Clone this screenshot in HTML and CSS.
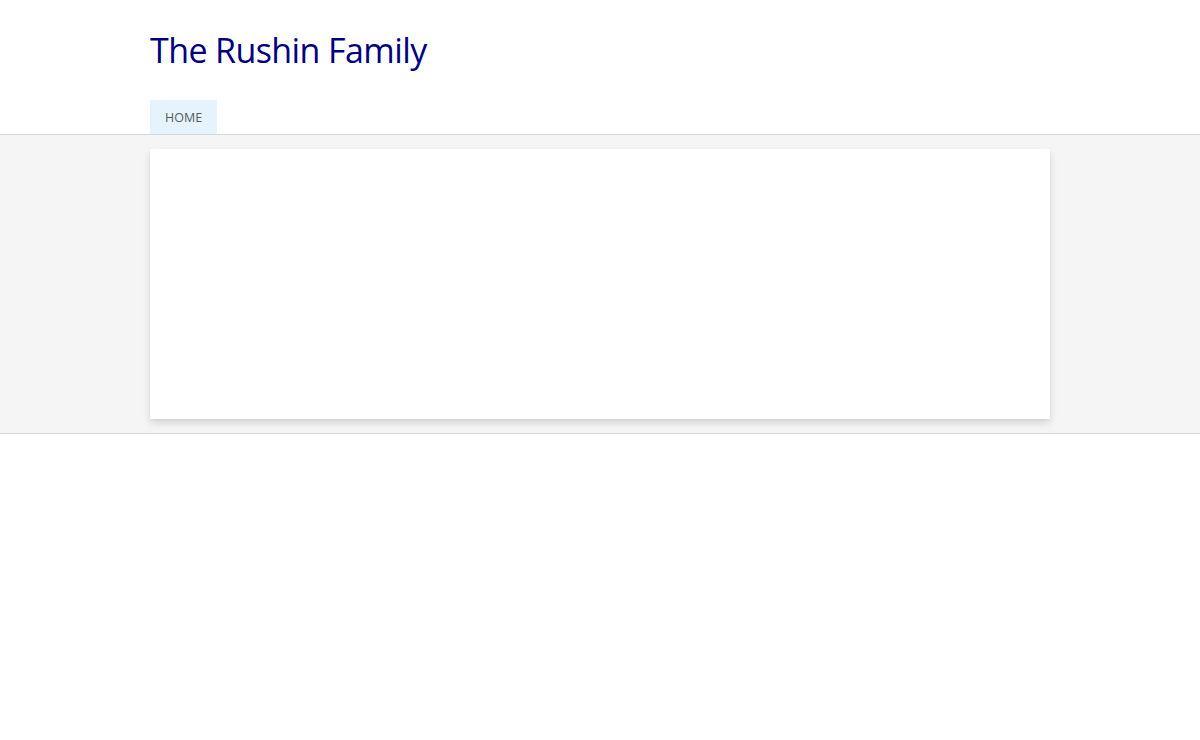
FILE: index.html
```html
<!DOCTYPE html>
<html>
<head>
<meta charset="utf-8">
<link rel="stylesheet" href="styles.css">
</head>
<body>
<header class="site-header">
  <div class="wrap">
    <h1 class="site-title">The Rushin Family</h1>
    <nav class="nav">
      <a class="nav-item active" href="#">HOME</a>
    </nav>
  </div>
</header>
<main class="band">
  <div class="wrap">
    <div class="card"></div>
  </div>
</main>
</body>
</html>
```

FILE: styles.css
```css
html, body {
  margin: 0;
  padding: 0;
  background: #fff;
  font-family: "Open Sans", "Noto Sans", sans-serif;
}
.wrap {
  width: 900px;
  margin: 0 auto;
}
.site-header {
  border-bottom: 1px solid #d6d6d6;
}
.site-title {
  margin: 0;
  padding-top: 27px;
  height: 100px;
  box-sizing: border-box;
  font-weight: 400;
  font-size: 34px;
  line-height: 46px;
  color: #000080;
  letter-spacing: -0.6px;
}
.nav {
  display: flex;
  height: 34px;
}
.nav-item {
  display: flex;
  align-items: center;
  padding: 0 15px;
  font-size: 12.5px;
  color: #555a60;
  text-decoration: none;
}
.nav-item.active {
  background: #e5f3fd;
}
.band {
  display: block;
  background: #f5f5f5;
  border-bottom: 1px solid #d6d6d6;
  padding: 14px 0;
}
.card {
  height: 270px;
  background: #fff;
  box-shadow: 0 4px 8px rgba(0,0,0,0.13), 0 1px 2px rgba(0,0,0,0.05);
}
```
